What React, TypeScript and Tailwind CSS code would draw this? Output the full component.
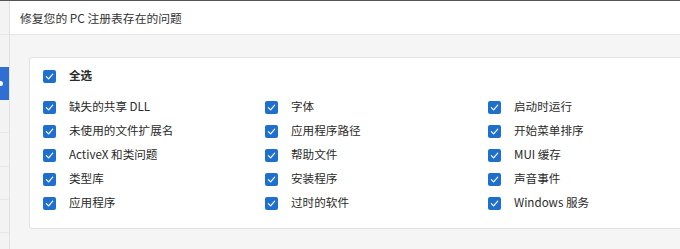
import React from 'react';

const items: string[][] = [
  ['缺失的共享 DLL', '字体', '启动时运行'],
  ['未使用的文件扩展名', '应用程序路径', '开始菜单排序'],
  ['ActiveX 和类问题', '帮助文件', 'MUI 缓存'],
  ['类型库', '安装程序', '声音事件'],
  ['应用程序', '过时的软件', 'Windows 服务'],
];

function Check() {
  return (
    <span className="flex h-[13px] w-[13px] shrink-0 items-center justify-center rounded-[2px] bg-[#1f6fcc]">
      <svg width="9" height="9" viewBox="0 0 10 10" fill="none">
        <path d="M1.5 5.2 L4 7.6 L8.6 2.4" stroke="white" strokeWidth="1.3" strokeLinecap="round" strokeLinejoin="round" />
      </svg>
    </span>
  );
}

function Item({ label, bold }: { label: string; bold?: boolean }) {
  return (
    <div className="flex h-6 items-center gap-[13px]">
      <Check />
      <span className={`text-[11.6px] text-[#2a2a2a] ${bold ? 'font-bold' : ''}`}>{label}</span>
    </div>
  );
}

export default function App() {
  return (
    <div
      className="flex h-[249px] w-[680px] overflow-hidden border-t border-[#555] bg-[#f3f3f3]"
      style={{ fontFamily: '"Noto Sans CJK SC", "Noto Sans", sans-serif' }}
    >
      {/* left strip */}
      <div className="flex w-[10px] shrink-0 flex-col border-r border-[#e2e2e2] bg-[#f3f3f3]">
        <div className="h-[34px] border-b border-[#e6e6e6]" />
        <div className="mt-[32px] flex h-[33px] items-center bg-[#2f6fd4]">
          <span className="-ml-[2px] h-[5px] w-[5px] rounded-full bg-white" />
        </div>
        <div className="h-[33px] border-b border-[#e6e6e6]" />
        <div className="h-[34px] border-b border-[#e6e6e6]" />
        <div className="h-[33px] border-b border-[#e6e6e6]" />
        <div className="h-[33px] border-b border-[#e6e6e6]" />
      </div>

      <div className="flex flex-1 flex-col">
        <div className="flex h-[34px] items-center border-b border-[#e6e6e6] bg-white pl-[10px]">
          <span className="text-[11.8px] text-[#333]">修复您的 PC 注册表存在的问题</span>
        </div>
        <div className="flex-1 bg-[#f5f5f5] pl-[19px] pt-[22px]">
          <div className="h-[172px] rounded-l-[3px] border border-r-0 border-[#e3e3e3] bg-white pl-[13px] pt-[6px]">
            <div className="mb-[7px]">
              <Item label="全选" bold />
            </div>
            {items.map((row, i) => (
              <div key={i} className="grid grid-cols-[222px_223px_1fr]">
                {row.map((label) => (
                  <Item key={label} label={label} />
                ))}
              </div>
            ))}
          </div>
        </div>
      </div>
    </div>
  );
}
